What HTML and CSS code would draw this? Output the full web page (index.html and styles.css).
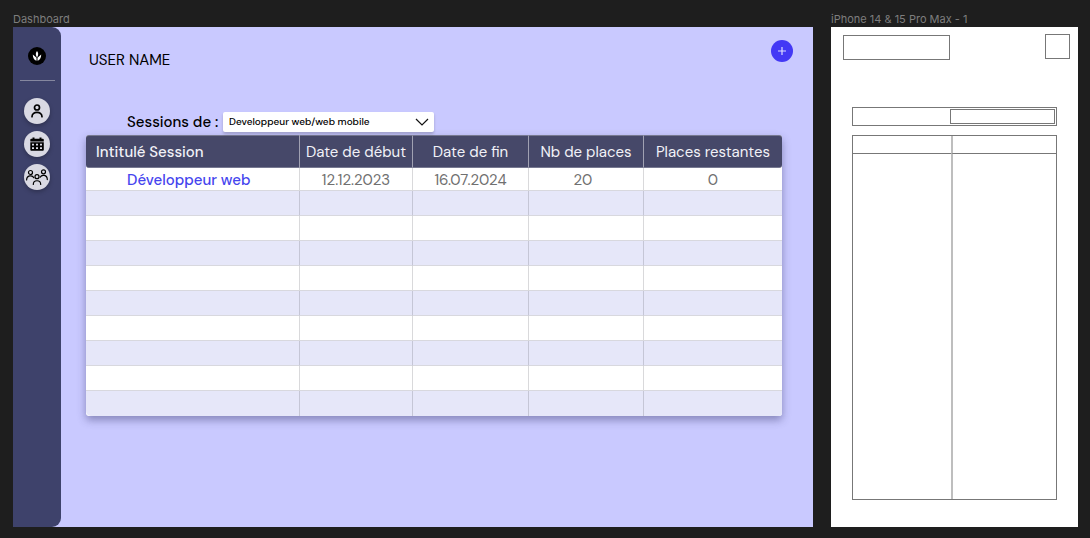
FILE: index.html
```html
<!DOCTYPE html>
<html lang="fr">
<head>
<meta charset="utf-8">
<title>Dashboard</title>
<link rel="stylesheet" href="styles.css">
</head>
<body>
<div class="canvas">
  <section class="frame frame-desktop">
    <h2 class="frame-label">Dashboard</h2>
    <div class="dashboard">
      <nav class="sidebar">
        <a class="logo" href="#" aria-label="Accueil">
          <svg viewBox="0 0 18 18" width="18" height="18"><circle cx="9" cy="9" r="9" fill="#000"/><path d="M9 4C10.600 6 10.600 8 9 10.500C7.400 8 7.400 6 9 4Z" fill="#fff"/><path d="M4.800 7.500L8.500 10.800V13.800C6 12.900 4.800 11 4.800 7.500ZM13.200 7.500L9.500 10.800V13.800C12 12.900 13.200 11 13.200 7.500Z" fill="#fff"/></svg>
        </a>
        <hr class="divider">
        <a class="nav-item" href="#" aria-label="Profil">
          <svg viewBox="0 0 26 26" width="26" height="26" fill="none" stroke="#000" stroke-width="1.700" stroke-linecap="round"><circle cx="13" cy="9.500" r="2.500"/><path d="M8 18.700C8 12.900 18 12.900 18 18.700"/></svg>
        </a>
        <a class="nav-item" href="#" aria-label="Calendrier">
          <svg viewBox="0 0 26 26" width="26" height="26"><path fill="#000" fill-rule="evenodd" d="M8.500 6.500h2v1.300h5V6.500h2v1.300h1.300q1 0 1 1v1.700H6.300V8.800q0-1 1-1h1.200ZM6.300 11.200h13.500v7.600q0 1-1 1H7.300q-1 0-1-1ZM8 12.700v1.800h2v-1.800ZM12 12.700v1.800h2v-1.800ZM16 12.700v1.800h2v-1.800ZM8 16.300v1.800h2v-1.800ZM12 16.300v1.800h2v-1.800ZM16 16.300v1.800h2v-1.800Z"/></svg>
        </a>
        <a class="nav-item" href="#" aria-label="Groupes">
          <svg viewBox="0 0 26 26" width="26" height="26" fill="none" stroke="#000" stroke-width="1.200" stroke-linecap="round"><circle cx="6.500" cy="8.500" r="2"/><circle cx="19.500" cy="7.800" r="2"/><circle cx="13" cy="12.700" r="2"/><path d="M2.600 16C2.600 11.200 8.500 10.800 9.800 13.700M16.200 13.200C17.600 10.200 23.300 10.700 23.300 15.600M9.300 20.500C9.300 15.500 16.700 15.500 16.700 20.500"/></svg>
        </a>
      </nav>
      <main class="main">
        <header class="topbar">
          <span class="user">USER NAME</span>
          <button class="add" type="button" aria-label="Ajouter"><svg viewBox="0 0 22 22" width="22" height="22"><path d="M11 7v8M7 11h8" stroke="#dcdcff" stroke-width="1.200"/></svg></button>
        </header>
        <div class="filter">
          <label for="formation">Sessions de :</label>
          <div class="select-wrap">
            <select id="formation"><option>Developpeur web/web mobile</option></select>
            <svg class="chevron" viewBox="0 0 14 8" width="14" height="8"><path d="M1 1l6 6 6-6" fill="none" stroke="#111" stroke-width="1.200"/></svg>
          </div>
        </div>
        <table class="sessions">
          <colgroup><col class="c-title"><col class="c-start"><col class="c-end"><col class="c-places"><col class="c-left"></colgroup>
          <thead><tr><th>Intitulé Session</th><th>Date de début</th><th>Date de fin</th><th>Nb de places</th><th>Places restantes</th></tr></thead>
          <tbody>
            <tr class="first"><td><a href="#">Développeur web</a></td><td>12.12.2023</td><td>16.07.2024</td><td class="count">20</td><td>0</td></tr>
            <tr><td></td><td></td><td></td><td></td><td></td></tr>
            <tr><td></td><td></td><td></td><td></td><td></td></tr>
            <tr><td></td><td></td><td></td><td></td><td></td></tr>
            <tr><td></td><td></td><td></td><td></td><td></td></tr>
            <tr><td></td><td></td><td></td><td></td><td></td></tr>
            <tr><td></td><td></td><td></td><td></td><td></td></tr>
            <tr><td></td><td></td><td></td><td></td><td></td></tr>
            <tr><td></td><td></td><td></td><td></td><td></td></tr>
            <tr><td></td><td></td><td></td><td></td><td></td></tr>
          </tbody>
        </table>
      </main>
    </div>
  </section>
  <section class="frame frame-phone">
    <h2 class="frame-label">iPhone 14 &amp; 15 Pro Max - 1</h2>
    <div class="phone">
      <div class="wire-top"><div class="box wire-name"></div><div class="box wire-button"></div></div>
      <div class="box wire-filter"><div class="box wire-select"></div></div>
      <div class="box wire-table">
        <div class="wire-head"></div><div class="wire-head wire-right"></div>
        <div></div><div class="wire-right"></div>
      </div>
    </div>
  </section>
</div>
</body>
</html>
```
FILE: styles.css
```css
* { box-sizing: border-box; }
body { margin: 0; background: #1e1e1e; color: #000; font-family: "DM Sans", Inter, sans-serif; }
svg { display: block; }
.canvas { display: flex; gap: 18px; min-height: 100vh; padding: 12px 12px 11px 13px; }
.frame { display: flex; flex-direction: column; min-width: 0; }
.frame-desktop { flex: 800 1 0; }
.frame-phone { flex: 247 1 0; }
.frame-label { margin: 0; height: 15px; font: 400 11px/15px Inter, sans-serif; color: #7d7d7d; white-space: nowrap; }
.dashboard { flex: 1; display: flex; background: #c9c9ff; }
.sidebar { flex: none; width: 48px; padding-top: 20px; display: flex; flex-direction: column; align-items: center; background: #3e426b; border-radius: 0 9px 9px 0; }
.divider { width: 35px; height: 1px; margin: 15px 0 17px; border: 0; background: #85879f; }
.nav-item { width: 26px; height: 26px; margin-bottom: 7px; border-radius: 50%; background: #d9d9e3; box-shadow: 0 2px 4px rgba(0, 0, 0, .25); }
.main { flex: 1; min-width: 0; padding: 13px 31px 0 25px; }
.topbar { display: flex; justify-content: space-between; height: 72px; margin-right: -11px; }
.user { padding: 10px 0 0 3px; font-size: 15px; line-height: 20px; }
.add { width: 22px; height: 22px; padding: 0; border: 0; border-radius: 50%; background: #4338f5; }
.filter { display: flex; gap: 4px; height: 23px; padding-left: 41px; }
.filter label { width: 92px; font-size: 15px; font-weight: 500; line-height: 20px; white-space: nowrap; }
.select-wrap { position: relative; width: 211px; height: 20px; }
.select-wrap select { appearance: none; display: block; width: 100%; height: 20px; padding: 0 24px 0 6px; border: 0; border-radius: 2px; background: #fff; color: #000; font: 500 10px/20px "DM Sans", Inter, sans-serif; box-shadow: 0 2px 3px rgba(0, 0, 0, .2); }
.chevron { position: absolute; right: 5px; top: 6px; pointer-events: none; }
.sessions { width: 100%; table-layout: fixed; border-collapse: separate; border-spacing: 0; background: #fff; border-radius: 3px; box-shadow: 0 4px 8px rgba(40, 40, 90, .42); }
.c-title { width: 214px; }
.c-start { width: 113px; }
.c-end { width: 116px; }
.c-places { width: 115px; }
.c-left { width: 138px; }
th, td { padding: 0; text-align: center; white-space: nowrap; border-right: 1px solid rgba(80, 80, 90, .22); }
th { height: 33px; padding-top: 1px; font-size: 15px; font-weight: 400; line-height: 20px; color: #f1f1f7; background: #464869; border-top: 1px solid #777991; border-bottom: 1px solid #777991; border-right-color: #a0a1b2; }
th:first-child { padding-left: 10px; text-align: left; font-weight: 500; border-radius: 3px 0 0 3px; }
th:last-child { border-radius: 0 3px 3px 0; }
th:last-child, td:last-child { border-right: 0; }
td { height: 25px; font-size: 15px; line-height: 20px; color: #707070; border-bottom: 1px solid #d8d8de; }
.first td { height: 23px; padding-top: 3px; line-height: 19px; }
.first td:first-child { padding-left: 41px; text-align: left; }
.first .count { padding-right: 6px; }
td a { color: #4545ee; font-weight: 500; text-decoration: none; }
tbody tr:nth-child(even) td { background: #e6e7f9; }
tbody tr:last-child td { border-bottom: 0; }
tbody tr:last-child td:first-child { border-bottom-left-radius: 5px; }
tbody tr:last-child td:last-child { border-bottom-right-radius: 3px; }
.phone { flex: 1; display: flex; flex-direction: column; padding: 7px 21px 27px; background: #fff; }
.box { border: 1px solid #777; }
.wire-top { display: flex; justify-content: space-between; height: 73px; margin: 0 -13px 0 -9px; }
.wire-name { width: 107px; height: 25px; margin-top: 1px; }
.wire-button { width: 25px; height: 25px; }
.wire-filter { display: flex; justify-content: flex-end; height: 19px; margin-bottom: 9px; padding: 1px; }
.wire-select { width: 105px; height: 15px; }
.wire-table { flex: 1; display: grid; grid-template: 18px 1fr / 98fr 105fr; }
.wire-head { border-bottom: 1px solid #777; }
.wire-right { border-left: 2px solid #bebebe; }
```
